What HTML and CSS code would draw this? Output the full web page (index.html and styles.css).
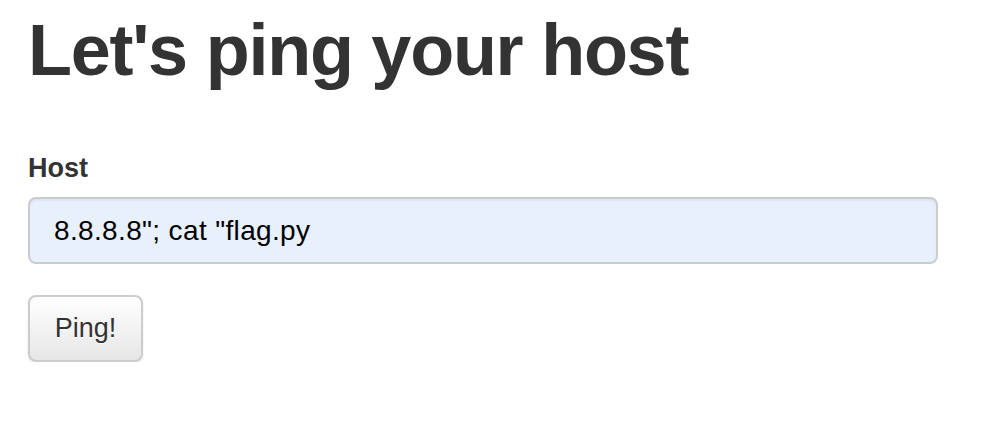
FILE: index.html
```html
<!DOCTYPE html>
<html>
<head>
<meta charset="utf-8">
<link rel="stylesheet" href="styles.css">
</head>
<body>
<div class="container">
  <h1 class="title">Let's ping your host</h1>
  <form class="form">
    <label class="label" for="host">Host</label>
    <input class="input" id="host" type="text" value="8.8.8.8&quot;; cat &quot;flag.py">
    <button class="btn" type="button">Ping!</button>
  </form>
</div>
</body>
</html>
```
FILE: styles.css
```css
html, body {
  margin: 0;
  padding: 0;
  background: #fff;
}
body {
  font-family: "Liberation Sans", Arial, sans-serif;
  color: #333;
}
.container {
  padding: 0 0 0 28px;
  width: 910px;
}
.title {
  margin: 0;
  padding-top: 10px;
  font-size: 72px;
  line-height: 80px;
  font-weight: bold;
  letter-spacing: -1.25px;
  color: #333;
}
.form {
  display: flex;
  flex-direction: column;
  align-items: flex-start;
  margin-top: 63px;
}
.label {
  font-size: 27px;
  font-weight: bold;
  line-height: 30px;
  color: #333;
}
.input {
  box-sizing: border-box;
  margin-top: 14px;
  width: 910px;
  height: 67px;
  padding: 0 24px;
  font-family: "Liberation Sans", Arial, sans-serif;
  font-size: 28px;
  letter-spacing: 0.35px;
  color: #000;
  background: #e8f0fe;
  border: 2px solid #ccc;
  border-radius: 8px;
  box-shadow: inset 0 2px 2px rgba(0,0,0,0.05);
  outline: none;
}
.btn {
  box-sizing: border-box;
  margin-top: 31px;
  width: 115px;
  height: 67px;
  font-family: "Liberation Sans", Arial, sans-serif;
  font-size: 27px;
  color: #333;
  background: linear-gradient(#ffffff, #e6e6e6);
  border: 2px solid #ccc;
  border-radius: 8px;
  box-shadow: 0 2px 3px rgba(0,0,0,0.08);
  text-shadow: 0 1px 1px rgba(255,255,255,0.75);
  padding: 0;
}
```
